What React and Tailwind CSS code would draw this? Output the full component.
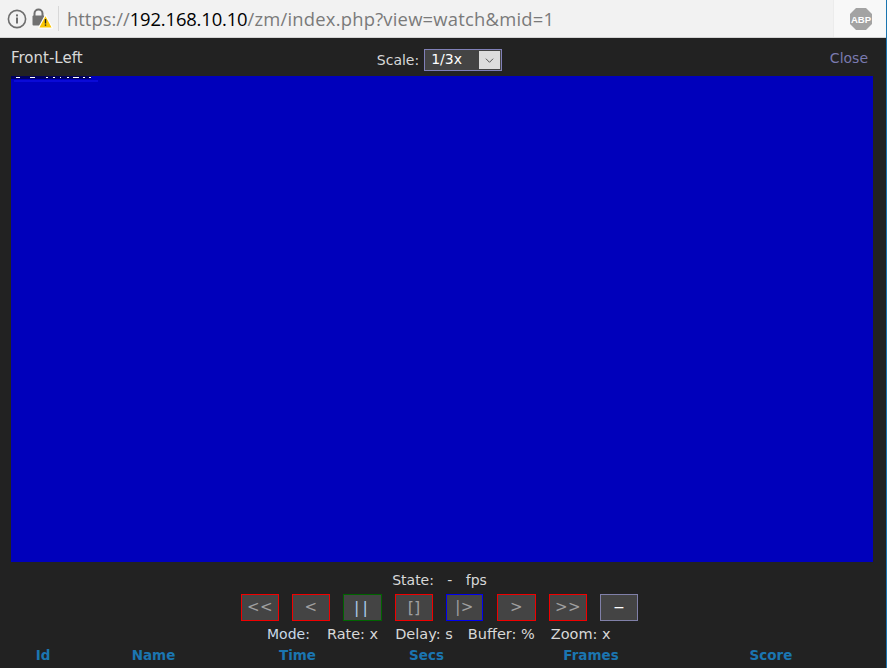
const font = "font-['DejaVu_Sans',sans-serif]";

const buttons = [
  { label: '<<', w: 'w-[38px]', border: 'border-[#f00000]' },
  { label: '<', w: 'w-[38px]', border: 'border-[#f00000]' },
  { label: '||', w: 'w-[39px]', border: 'border-[#006400]', text: 'text-[#a8c8e8] tracking-[3px] text-[16px]' },
  { label: '[]', w: 'w-[38px]', border: 'border-[#f00000]', text: 'text-[#a0a0a0] tracking-[0px] text-[16px]' },
  { label: '|>', w: 'w-[37px]', border: 'border-[#0000f0]' },
  { label: '>', w: 'w-[39px] ml-px', border: 'border-[#f00000]' },
  { label: '>>', w: 'w-[38px]', border: 'border-[#f00000]' },
  { label: '−', w: 'w-[38px]', border: 'border-[#8080a8]', text: 'text-white' },
];

const columns = ['Id', 'Name', 'Time', 'Secs', 'Frames', 'Score'];

const AddressBar = () => (
  <div className="h-[38px] shrink-0 flex items-center bg-[#f2f2f2] border-b border-[#d4d4d4] font-['Open_Sans',sans-serif]">
    <svg className="ml-[7px] w-5 h-5" viewBox="0 0 20 20" fill="none">
      <circle cx="10" cy="10" r="8.6" stroke="#6e6e6e" strokeWidth="1.6" />
      <rect x="9" y="8.5" width="2" height="6" fill="#6e6e6e" />
      <rect x="9" y="5.4" width="2" height="2" fill="#6e6e6e" />
    </svg>
    <svg className="ml-[4px] w-[22px] h-[22px]" viewBox="0 0 22 22">
      <path d="M3.5 8V5.5a4 4 0 0 1 8 0V8" fill="none" stroke="#707070" strokeWidth="2" />
      <rect x="1.5" y="7.5" width="12" height="10" rx="1" fill="#707070" />
      <path d="M14.5 7 L21.5 20 H7.5 Z" fill="#fbc600" stroke="#fff" strokeWidth="1.2" strokeLinejoin="round" />
      <rect x="13.8" y="11" width="1.4" height="4.5" fill="#222" />
      <rect x="13.8" y="16.4" width="1.4" height="1.4" fill="#222" />
    </svg>
    <div className="ml-[5px] w-px h-[25px] bg-[#d8d8d8]" />
    <div className="ml-2 text-[18.4px] text-[#7a7a7a] whitespace-nowrap">
      https://<span className="text-black tracking-[-0.15px]">192.168.10.10</span>
      <span className="tracking-[0.22px]">/zm/index.php?view=watch&amp;mid=1</span>
    </div>
    <div className="ml-auto w-[53px] h-[37px] flex items-center justify-center bg-[#f8f8f8] border-l border-[#ececec]">
      <svg className="w-[24px] h-[24px] ml-[2px]" viewBox="0 0 24 24">
        <path d="M7 1 H17 L23 7 V17 L17 23 H7 L1 17 V7 Z" fill="#a3a3a3" />
        <text x="12" y="15.5" textAnchor="middle" fontSize="9.5" fontWeight="700" fill="#fff" fontFamily="Liberation Sans">ABP</text>
      </svg>
    </div>
  </div>
);

const App = () => {
  return (
    <div className={`h-[668px] w-[887px] overflow-hidden flex flex-col bg-[#222222] border-r border-[#1b75b0] ${font} text-[14px] text-[#d8d8d8]`}>
      <AddressBar />

      <div className="relative h-[38px] shrink-0 flex items-center justify-center pr-[7px]">
        <span className="absolute left-[11px] top-[10px] text-[15px] leading-[20px]">Front-Left</span>
        <span className="mr-[5px] mt-[6px]">Scale:</span>
        <div className="mt-[6px] w-[78px] h-[22px] flex border border-[#8080b8] bg-[#444444]">
          <span className="flex-1 pl-[6px] leading-[19px] text-white">1/3x</span>
          <span className="w-[23px] flex items-center justify-center bg-[#dddddd] border border-[#444444]">
            <svg className="w-[9px] h-[9px]" viewBox="0 0 10 10" fill="none" stroke="#444" strokeWidth="1">
              <path d="M1 3 L5 7 L9 3" />
            </svg>
          </span>
        </div>
        <span className="absolute right-[18px] top-[10px] text-[#7a7ab0]">Close</span>
      </div>

      <div className="relative ml-[11px] mr-[13px] h-[486px] shrink-0 bg-[#0000bb]">
        <svg className="absolute left-0 top-0 w-[90px] h-[10px]" viewBox="0 0 90 10">
          <rect x="0" y="0" width="80" height="3" fill="#000060" />
          <path d="M5 1.5h4M19 1.5h5M35 1.5h2M42 1.5h2M49 1.5h1M56 1.5h2M62 1.5h6M72 1.5h2M78 1.5h2" stroke="#fff" strokeWidth="1" />
          <rect x="3" y="4" width="84" height="2" fill="#0a0ad8" />
        </svg>
      </div>

      <div className="mt-[9px] text-center text-[14px] leading-[18px] pr-[7px] whitespace-pre">State:&nbsp;&nbsp; -&nbsp;&nbsp; fps</div>

      <div className="mt-[5px] ml-[241px] flex gap-[13px]">
        {buttons.map((b) => (
          <div
            key={b.label}
            className={`${b.w} h-[27px] flex items-center justify-center border ${b.border} bg-[#444444] ${b.text || 'text-[#a0a0a0] tracking-[0.5px] text-[15px]'}`}
          >
            {b.label}
          </div>
        ))}
      </div>

      <div className="mt-[4px] ml-[267px] flex leading-[18px] whitespace-pre">
        <span className="text-[#c8d8e8]">Mode:</span>
        <span className="ml-[17px] text-[14.5px]">Rate: x</span>
        <span className="ml-[17px] text-[14.5px]">Delay: s</span>
        <span className="ml-[15px] text-[14.5px]">Buffer: %</span>
        <span className="ml-[16px] text-[14.5px]">Zoom: x</span>
      </div>

      <div className="ml-[11px] mt-[3px] grid grid-cols-[64px_157px_131px_127px_202px_158px] text-center font-bold text-[#1b75b0] text-[13.5px] leading-[18px]">
        {columns.map((c) => (
          <span key={c}>{c}</span>
        ))}
      </div>
    </div>
  );
};

export default App;
